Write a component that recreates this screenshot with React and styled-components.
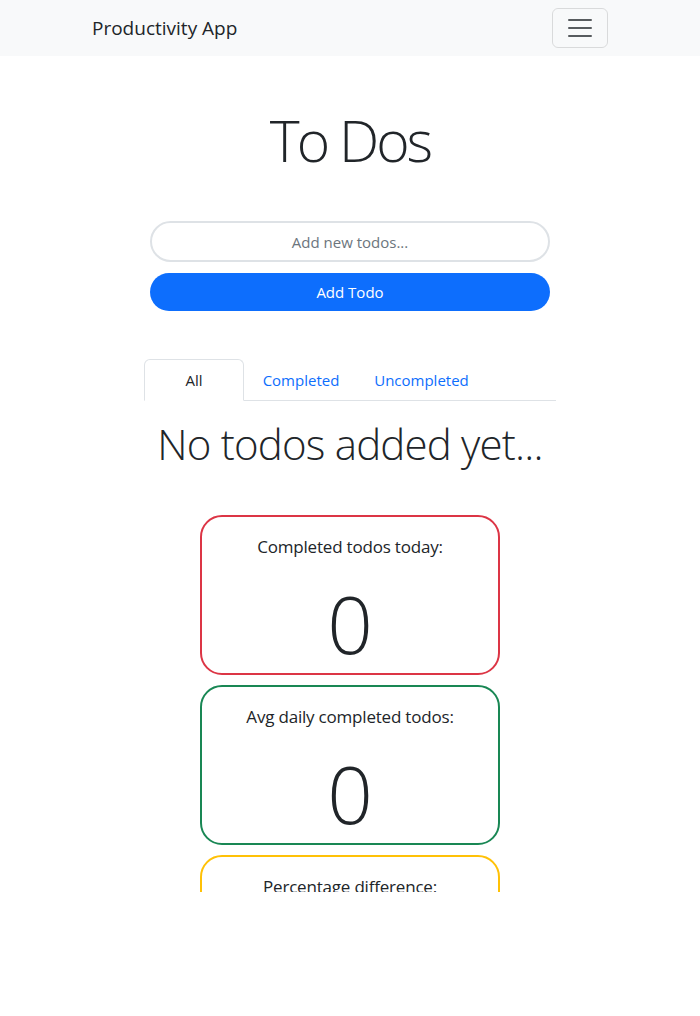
import styled, { createGlobalStyle } from "styled-components";

const GlobalStyle = createGlobalStyle`
  body {
    margin: 0;
    font-family: "Open Sans", "Liberation Sans", sans-serif;
    color: #212529;
    background: #fff;
  }
  * {
    box-sizing: border-box;
  }
`;

const tabs = [
  { label: "All", width: 100, active: true },
  { label: "Completed", width: 110 },
  { label: "Uncompleted", width: 127 },
];

const stats = [
  { title: "Completed todos today:", value: 0, color: "#dc3545" },
  { title: "Avg daily completed todos:", value: 0, color: "#198754" },
  { title: "Percentage difference:", value: 0, color: "#ffc107" },
];

const App = () => {
  return (
    <Page>
      <GlobalStyle />
      <Navbar>
        <Brand>Productivity App</Brand>
        <Toggler aria-label="Toggle navigation">
          <svg width="30" height="30" viewBox="0 0 30 30">
            <path
              d="M4 7h22M4 15h22M4 23h22"
              stroke="rgba(33,37,41,0.75)"
              strokeWidth="2"
              strokeLinecap="round"
            />
          </svg>
        </Toggler>
      </Navbar>
      <Main>
        <Title>To Dos</Title>
        <TodoForm>
          <TodoInput placeholder="Add new todos..." />
          <AddButton>Add Todo</AddButton>
        </TodoForm>
        <TabList>
          {tabs.map((t) => (
            <Tab key={t.label} $width={t.width} $active={t.active}>
              {t.label}
            </Tab>
          ))}
        </TabList>
        <EmptyText>No todos added yet...</EmptyText>
        <Stats>
          {stats.map((s) => (
            <StatCard key={s.title} $color={s.color}>
              <StatTitle>{s.title}</StatTitle>
              <StatValue>{s.value}</StatValue>
            </StatCard>
          ))}
        </Stats>
      </Main>
    </Page>
  );
};

const Page = styled.div`
  width: 700px;
  min-height: 1016px;
  background: #fff;
`;

const Navbar = styled.nav`
  display: flex;
  align-items: center;
  justify-content: space-between;
  height: 56px;
  padding: 0 92px;
  background-color: #f8f9fa;
`;

const Brand = styled.span`
  font-size: 19px;
  color: #212529;
`;

const Toggler = styled.button`
  display: flex;
  align-items: center;
  justify-content: center;
  width: 56px;
  height: 40px;
  padding: 0;
  background: transparent;
  border: 1px solid rgba(0, 0, 0, 0.12);
  border-radius: 6px;
`;

const Main = styled.main`
  display: flex;
  flex-direction: column;
  align-items: center;
  width: 412px;
  margin: 0 auto;
`;

const Title = styled.h1`
  margin: 50px 0 0;
  font-size: 57px;
  font-weight: 300;
  line-height: 68px;
  letter-spacing: -3px;
`;

const TodoForm = styled.div`
  display: flex;
  flex-direction: column;
  gap: 11px;
  width: 400px;
  margin-top: 47px;
`;

const TodoInput = styled.input`
  width: 100%;
  height: 41px;
  border: 2px solid #dee2e6;
  border-radius: 50rem;
  font-family: inherit;
  font-size: 15px;
  text-align: center;
  color: #212529;
  outline: none;
  &::placeholder {
    color: #6c757d;
  }
`;

const AddButton = styled.button`
  width: 100%;
  height: 38px;
  border: none;
  border-radius: 50rem;
  background-color: #0d6efd;
  color: #fff;
  font-family: inherit;
  font-size: 15px;
`;

const TabList = styled.div`
  display: flex;
  gap: 2px;
  width: 412px;
  margin-top: 48px;
  border-bottom: 1px solid #dee2e6;
`;

const Tab = styled.div`
  width: ${(p) => p.$width}px;
  height: 42px;
  margin-bottom: -1px;
  display: flex;
  align-items: center;
  justify-content: center;
  font-size: 15px;
  color: ${(p) => (p.$active ? "#212529" : "#0d6efd")};
  background: ${(p) => (p.$active ? "#fff" : "transparent")};
  border: 1px solid ${(p) => (p.$active ? "#dee2e6" : "transparent")};
  border-bottom-color: ${(p) => (p.$active ? "#fff" : "transparent")};
  border-radius: 6px 6px 0 0;
`;

const EmptyText = styled.h2`
  margin: 18px 0 0;
  font-size: 42px;
  font-weight: 300;
  line-height: 1.2;
  letter-spacing: -0.8px;
`;

const Stats = styled.div`
  display: flex;
  flex-direction: column;
  gap: 10px;
  width: 300px;
  height: 377px;
  margin-top: 46px;
  overflow: hidden;
`;

const StatCard = styled.div`
  flex-shrink: 0;
  display: flex;
  flex-direction: column;
  align-items: center;
  height: 160px;
  padding-top: 16px;
  border: 2px solid ${(p) => p.$color};
  border-radius: 22px;
`;

const StatTitle = styled.div`
  font-size: 17px;
  line-height: 27px;
  letter-spacing: -0.2px;
`;

const StatValue = styled.div`
  margin-top: 23px;
  font-size: 80px;
  font-weight: 300;
  line-height: 80px;
`;

export default App;
